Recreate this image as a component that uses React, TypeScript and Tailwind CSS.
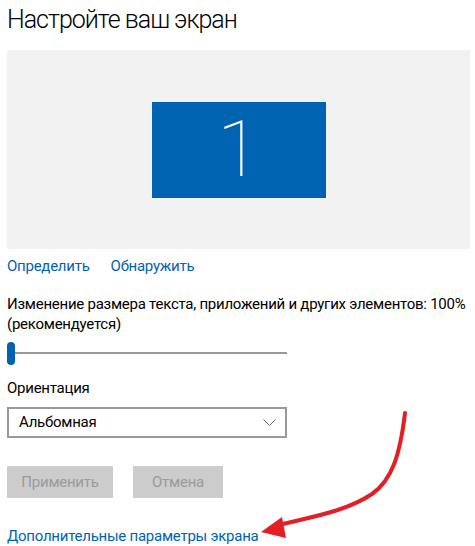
import React from 'react'

const App: React.FC = () => {
  return (
    <div
      className="relative w-[475px] h-[546px] bg-white overflow-hidden text-black"
      style={{ fontFamily: 'Roboto, "Noto Sans", sans-serif' }}
    >
      <div className="pl-[7px] pt-[2px] tracking-[-0.25px]">
        {/* Title */}
        <h1 className="h-[48px] text-[25px] font-light leading-[36px] tracking-[-1px]">
          Настройте ваш экран
        </h1>

        {/* Display preview */}
        <div className="w-[463px] h-[199px] bg-[#f2f2f2] flex items-center justify-center">
          <div className="w-[174px] h-[96px] bg-[#0063b1] flex items-center justify-center">
            <span className="text-white text-[78px] font-thin leading-none">1</span>
          </div>
        </div>

        {/* Links */}
        <div className="flex gap-[21px] h-[34px] items-center text-[15px] text-[#0063b1]">
          <span>Определить</span>
          <span>Обнаружить</span>
        </div>

        {/* Scale */}
        <div className="pt-[11px] text-[15px] leading-[20px] whitespace-nowrap">
          <p>Изменение размера текста, приложений и других элементов: 100%</p>
          <p>(рекомендуется)</p>
        </div>
        <div className="w-[280px] h-[24px] mt-[7px] flex items-center">
          <div className="w-[8px] h-[23px] rounded-full bg-[#0063b1]" />
          <div className="flex-1 h-[2px] bg-[#999999]" />
        </div>

        {/* Orientation */}
        <p className="mt-[13px] text-[15px] leading-[20px]">Ориентация</p>
        <div className="mt-[9px] w-[280px] h-[31px] border-2 border-[#999999] flex items-center justify-between pl-[10px] pr-[9px] text-[15px]">
          <span>Альбомная</span>
          <svg width="13" height="8" viewBox="0 0 13 8" fill="none">
            <path d="M0.5 0.5 L6.5 6.5 L12.5 0.5" stroke="#666666" strokeWidth="1" />
          </svg>
        </div>

        {/* Buttons */}
        <div className="mt-[28px] flex gap-[20px] text-[15px] text-[#9a9a9a]">
          <div className="w-[106px] h-[32px] bg-[#cccccc] flex items-center justify-center">Применить</div>
          <div className="w-[90px] h-[32px] bg-[#cccccc] flex items-center justify-center">Отмена</div>
        </div>

        {/* Advanced link */}
        <p className="mt-[28px] text-[15px] leading-[20px] text-[#0063b1]">Дополнительные параметры экрана</p>
      </div>

      {/* Red arrow annotation */}
      <svg className="absolute left-0 top-0" width="475" height="546" viewBox="0 0 475 546" fill="none">
        <path
          d="M405 413 C400 455 392 480 372 494 C345 512 310 517 279 525"
          stroke="#e31e24"
          strokeWidth="4"
          strokeLinecap="round"
        />
        <path d="M261 532 L282 517 L286 538 Z" fill="#e31e24" />
      </svg>
    </div>
  )
}

export default App
